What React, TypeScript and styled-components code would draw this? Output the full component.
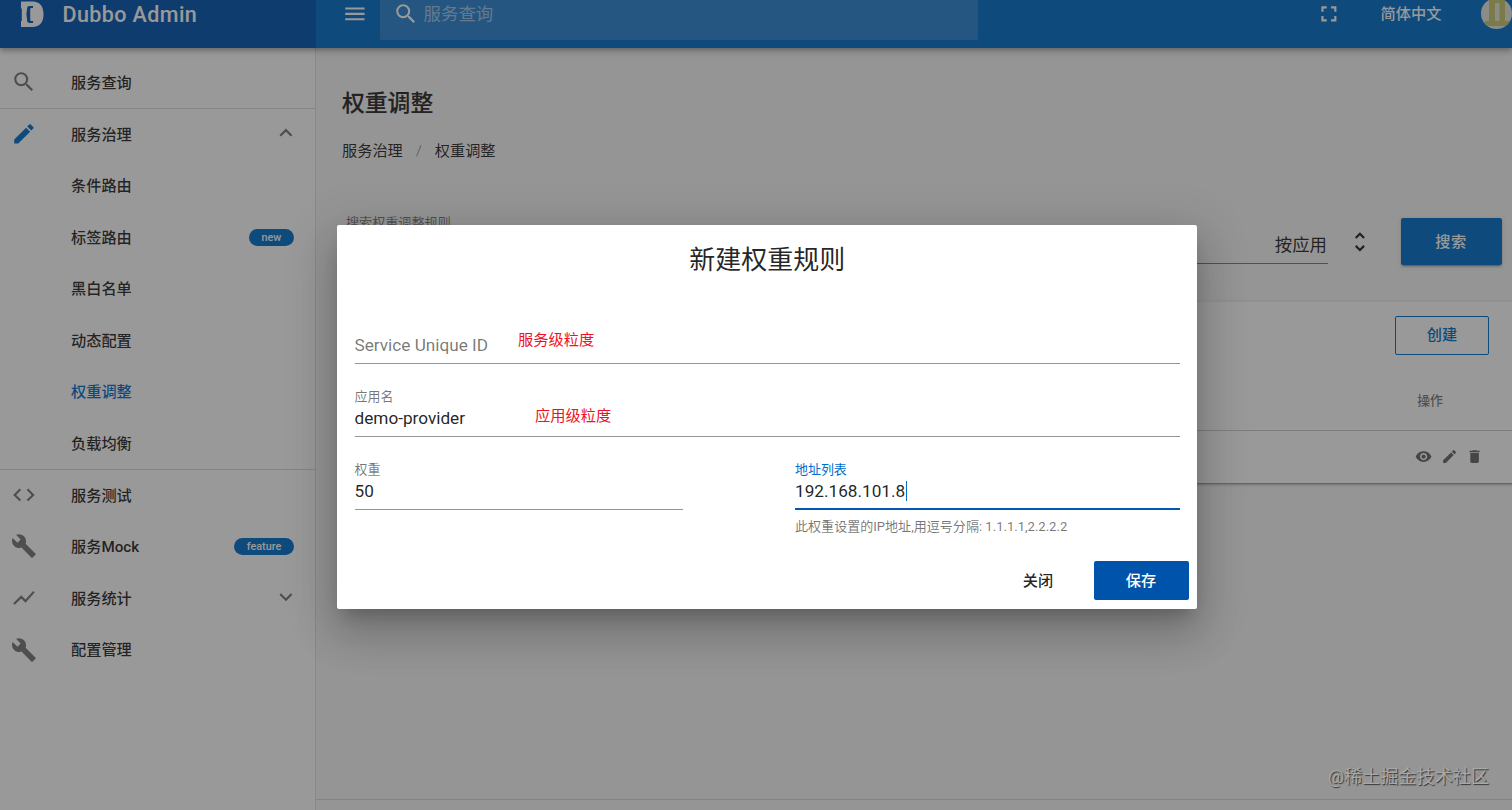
import React from "react";
import styled, { createGlobalStyle, css } from "styled-components";
import {
  MdBuild,
  MdCode,
  MdDelete,
  MdEdit,
  MdExpandLess,
  MdExpandMore,
  MdFullscreen,
  MdMenu,
  MdSearch,
  MdShowChart,
  MdUnfoldMore,
  MdVisibility,
} from "react-icons/md";

const primary = "#006dcb";
const textColor = "rgba(0,0,0,.87)";
const mutedText = "rgba(0,0,0,.54)";

const GlobalStyle = createGlobalStyle`
  * { box-sizing: border-box; }
  body {
    margin: 0;
    overflow: hidden;
    font-family: Roboto, "Noto Sans CJK SC", sans-serif;
    color: ${textColor};
  }
  svg { display: block; flex: none; }
`;

const Page = styled.div`
  position: relative;
  width: 1512px;
  height: 810px;
  overflow: hidden;
  display: flex;
  flex-direction: column;
  background: #f7f7f7;
`;

/* Header */
const Header = styled.header`
  position: relative;
  z-index: 1;
  flex: none;
  display: flex;
  height: 69px;
  margin-top: -21px;
  background: ${primary};
  color: #fff;
  box-shadow: 0 2px 4px -1px rgba(0, 0, 0, 0.2), 0 4px 5px rgba(0, 0, 0, 0.14),
    0 1px 10px rgba(0, 0, 0, 0.12);
`;

const Brand = styled.div`
  width: 316px;
  padding: 1px 0 0 20px;
  display: flex;
  align-items: center;
  gap: 18.5px;
  background: #0053b0;
  font-size: 21.5px;
  font-weight: 500;
  letter-spacing: 0.4px;
`;

const Toolbar = styled.div`
  flex: 1;
  min-width: 0;
  display: flex;
  align-items: center;
  padding-left: 25.5px;
  white-space: nowrap;
`;

const SearchBox = styled.div`
  flex: none;
  width: 598px;
  height: 52px;
  margin-left: 13px;
  padding-left: 13px;
  display: flex;
  align-items: center;
  gap: 4.5px;
  border-radius: 2px;
  background: rgba(255, 255, 255, 0.16);
  font-size: 17.4px;
`;

const SearchHint = styled.span`
  padding-bottom: 3px;
  color: rgba(255, 255, 255, 0.55);
`;

const Language = styled.span`
  margin-left: 38.5px;
  padding-bottom: 4px;
  font-size: 15.2px;
  font-weight: 500;
`;

const FullscreenSlot = styled.div`
  margin-left: 338px;
`;

const Avatar = styled.div`
  margin-left: 40px;
`;

/* Body */
const Body = styled.div`
  flex: 1;
  display: flex;
  min-height: 0;
`;

const Sidebar = styled.nav`
  flex: none;
  width: 316px;
  padding-top: 8.4px;
  background: #fff;
  border-right: 1px solid rgba(0, 0, 0, 0.12);
`;

const NavRow = styled.div<{ $divided?: boolean; $active?: boolean }>`
  height: 51.58px;
  padding: 0 16px 0 11px;
  display: flex;
  align-items: center;
  font-size: 15.2px;
  font-weight: 500;
  color: ${(p) => (p.$active ? primary : textColor)};
  ${(p) =>
    p.$divided &&
    css`
      box-shadow: inset 0 1px 0 rgba(0, 0, 0, 0.14);
    `}
`;

const NavIcon = styled.span<{ $active?: boolean }>`
  width: 60px;
  color: ${(p) => (p.$active ? primary : mutedText)};
`;

const NavLabel = styled.span`
  flex: 1;
  padding-bottom: 2.4px;
`;

const NavArrow = styled.span`
  margin-top: -2px;
  color: ${mutedText};
`;

const Chip = styled.span`
  height: 17px;
  margin: 1px 5px 0 0;
  padding: 0 12.8px;
  border-radius: 9px;
  background: ${primary};
  color: #fff;
  font-size: 10.8px;
  line-height: 18px;
`;

const Main = styled.main`
  flex: 1;
  min-width: 0;
  display: flex;
  flex-direction: column;
`;

const PageTitle = styled.h1`
  margin: 39px 0 0 26px;
  font-size: 22.8px;
  line-height: 34px;
  font-weight: 500;
  -webkit-text-stroke: 0.2px currentColor;
`;

const Breadcrumb = styled.div`
  margin: 19px 0 0 26px;
  display: flex;
  gap: 13px;
  font-size: 15.2px;
  line-height: 22px;
`;

const Slash = styled.span`
  width: 6px;
  text-align: center;
  color: rgba(0, 0, 0, 0.38);
`;

const SearchForm = styled.div`
  height: 140px;
  padding: 52px 10px 0 30px;
  display: flex;
  align-items: flex-start;
`;

const QueryField = styled.div`
  flex: none;
  width: 982px;
  height: 50px;
  padding-right: 1px;
  border-bottom: 1px solid rgba(0, 0, 0, 0.5);
  display: flex;
  justify-content: space-between;
`;

const QueryLabel = styled.span`
  font-size: 13.1px;
  line-height: 20px;
  color: ${mutedText};
`;

const QueryMode = styled.span`
  padding-top: 18px;
  font-size: 17.4px;
  line-height: 26px;
`;

const UnfoldSlot = styled.span`
  margin: 15px 28.7px 0 18.5px;
  color: ${textColor};
`;

const SearchButton = styled.button`
  flex: none;
  width: 101px;
  height: 47px;
  margin-top: 4px;
  padding: 0 1px 4px 0;
  border: 0;
  border-radius: 2px;
  background: ${primary};
  color: #fff;
  font: 500 15.2px Roboto, "Noto Sans CJK SC", sans-serif;
  letter-spacing: 0.5px;
  box-shadow: 0 3px 1px -2px rgba(0, 0, 0, 0.2), 0 2px 2px rgba(0, 0, 0, 0.14),
    0 1px 5px rgba(0, 0, 0, 0.12);
`;

const TableCard = styled.section`
  margin: 0 -28px 0 26px;
  height: 181.4px;
  background: #fff;
  box-shadow: 0 3px 1px -2px rgba(0, 0, 0, 0.2), 0 2px 2px rgba(0, 0, 0, 0.14),
    0 1px 5px rgba(0, 0, 0, 0.12);
  display: flex;
  flex-direction: column;
`;

const CardActions = styled.div`
  height: 67px;
  padding: 14px 51px 0 0;
  display: flex;
  justify-content: flex-end;
`;

const OutlineButton = styled.button`
  width: 94px;
  height: 38.5px;
  padding: 0 0 4px;
  border: 1px solid ${primary};
  border-radius: 2px;
  background: transparent;
  color: ${primary};
  font: 500 15.2px Roboto, "Noto Sans CJK SC", sans-serif;
`;

const TableHead = styled.div`
  height: 62px;
  padding: 0 97px 1px 0;
  display: flex;
  justify-content: flex-end;
  align-items: center;
  border-bottom: 1px solid rgba(0, 0, 0, 0.2);
  font-size: 12.9px;
  font-weight: 500;
  color: ${mutedText};
`;

const TableRow = styled.div`
  flex: 1;
  padding: 0 56.5px 1px 0;
  display: flex;
  justify-content: flex-end;
  align-items: center;
  gap: 8.5px;
  color: rgba(0, 0, 0, 0.6);
`;

const Footer = styled.footer`
  height: 11px;
  margin-top: auto;
  border-top: 1px solid rgba(0, 0, 0, 0.14);
`;

/* Dialog */
const Overlay = styled.div`
  position: absolute;
  inset: 0;
  z-index: 2;
  padding: 225px 0 0 337px;
  background: rgba(33, 33, 33, 0.46);
`;

const Dialog = styled.div`
  position: relative;
  width: 860px;
  height: 383.6px;
  border-radius: 2px;
  background: #fff;
  display: flex;
  flex-direction: column;
  padding: 0 17px 0 17.5px;
  box-shadow: 0 12px 16px -7px rgba(0, 0, 0, 0.2),
    0 26px 41px 3px rgba(0, 0, 0, 0.14), 0 10px 49px 9px rgba(0, 0, 0, 0.12);
`;

const DialogTitle = styled.h2`
  margin: 16px 0 36px;
  font-size: 26px;
  line-height: 38px;
  font-weight: 400;
  text-align: center;
`;

const Field = styled.div<{ $width?: number; $focused?: boolean }>`
  width: ${(p) => (p.$width ? `${p.$width}px` : "100%")};
  height: 73px;
  color: ${(p) => (p.$focused ? primary : mutedText)};
`;

const FieldLabel = styled.div`
  height: 20px;
  font-size: 12.95px;
  line-height: 18px;
`;

const FieldValue = styled.div<{ $focused?: boolean; $placeholder?: boolean }>`
  height: 29px;
  display: flex;
  align-items: flex-start;
  border-bottom: ${(p) => (p.$focused ? "2px solid #0058b0" : "1px solid rgba(0,0,0,.42)")};
  color: ${(p) => (p.$placeholder ? mutedText : textColor)};
  font-size: 17.2px;
  line-height: 20px;
`;

const Caret = styled.span`
  width: 1px;
  height: 20px;
  margin-left: 1px;
  background: ${primary};
`;

const FieldHint = styled.div`
  padding-top: 7px;
  font-size: 13.05px;
  line-height: 20px;
  color: ${mutedText};
  white-space: nowrap;
`;

const FieldRow = styled.div`
  display: flex;
  justify-content: space-between;
`;

const DialogActions = styled.div`
  margin: auto -8.5px 8.6px 0;
  display: flex;
  justify-content: flex-end;
  gap: 8px;
`;

const DialogButton = styled.button<{ $filled?: boolean }>`
  width: 95px;
  height: 39px;
  padding: 0 0 4px;
  border: 0;
  border-radius: 2px;
  background: ${(p) => (p.$filled ? "#0053ab" : "transparent")};
  color: ${(p) => (p.$filled ? "#fff" : textColor)};
  font: 500 15.2px Roboto, "Noto Sans CJK SC", sans-serif;
`;

const Note = styled.span<{ $left: number; $top: number }>`
  position: absolute;
  left: ${(p) => p.$left}px;
  top: ${(p) => p.$top}px;
  font-size: 15.25px;
  line-height: 22px;
  color: #ef1226;
`;

const Watermark = styled.span`
  position: absolute;
  z-index: 3;
  right: 23px;
  bottom: 20px;
  font-size: 17.9px;
  line-height: 26px;
  letter-spacing: 0.2px;
  color: #a8a8a8;
  text-shadow: 1px 1px 1px rgba(0, 0, 0, 0.65);
`;

const Logo = () => (
  <svg width="24" height="27" viewBox="0 0 24 27">
    <path
      fill="#fff"
      fillRule="evenodd"
      d="M1 .5h11.500c7.500 0 11 5 11 12.800S20 26 12.500 26H1v-6h.8V7.500H1zM13 5H9.500C7.600 5 7 6 7 8.500l-.6 4.700.6 4.500c0 3 .6 4.300 2.500 4.300H13v-2h-1.300c-1 0-1.500-.4-1.500-1.500V8.500c0-1.100.5-1.500 1.500-1.500H13z"
    />
  </svg>
);

const AvatarImage = () => (
  <svg width="31" height="31" viewBox="0 0 31 31">
    <clipPath id="avatar-circle">
      <circle cx="15.500" cy="15.500" r="15.500" />
    </clipPath>
    <g clipPath="url(#avatar-circle)">
      <path fill="#e6e6e0" d="M0 0h31v31H0z" />
      <path fill="#c6c766" d="M8 1.500h16v21.500h4v5H4v-5h4zM14 5v18h4.500V5z" fillRule="evenodd" />
    </g>
  </svg>
);

const ICON = 25.8;

type NavItem = {
  label: string;
  icon?: React.ReactNode;
  arrow?: React.ReactNode;
  chip?: string;
  divided?: boolean;
  active?: boolean;
  iconActive?: boolean;
};

const navItems: NavItem[] = [
  { label: "服务查询", icon: <MdSearch size={ICON} /> },
  {
    label: "服务治理",
    icon: <MdEdit size={ICON} />,
    arrow: <MdExpandLess size={ICON} />,
    divided: true,
    iconActive: true,
  },
  { label: "条件路由" },
  { label: "标签路由", chip: "new" },
  { label: "黑白名单" },
  { label: "动态配置" },
  { label: "权重调整", active: true },
  { label: "负载均衡" },
  { label: "服务测试", icon: <MdCode size={ICON} />, divided: true },
  { label: "服务Mock", icon: <MdBuild size={ICON} />, chip: "feature" },
  { label: "服务统计", icon: <MdShowChart size={ICON} />, arrow: <MdExpandMore size={ICON} /> },
  { label: "配置管理", icon: <MdBuild size={ICON} /> },
];

export default function App() {
  return (
    <Page>
      <GlobalStyle />
      <Header>
        <Brand>
          <Logo />
          Dubbo Admin
        </Brand>
        <Toolbar>
          <MdMenu size={ICON} />
          <SearchBox>
            <MdSearch size={ICON} />
            <SearchHint>服务查询</SearchHint>
          </SearchBox>
          <FullscreenSlot>
            <MdFullscreen size={ICON} />
          </FullscreenSlot>
          <Language>简体中文</Language>
          <Avatar>
            <AvatarImage />
          </Avatar>
        </Toolbar>
      </Header>

      <Body>
        <Sidebar>
          {navItems.map((item) => (
            <NavRow key={item.label} $divided={item.divided} $active={item.active}>
              <NavIcon $active={item.iconActive}>{item.icon}</NavIcon>
              <NavLabel>{item.label}</NavLabel>
              {item.chip && <Chip>{item.chip}</Chip>}
              {item.arrow && <NavArrow>{item.arrow}</NavArrow>}
            </NavRow>
          ))}
        </Sidebar>

        <Main>
          <PageTitle>权重调整</PageTitle>
          <Breadcrumb>
            <span>服务治理</span>
            <Slash>/</Slash>
            <span>权重调整</span>
          </Breadcrumb>
          <SearchForm>
            <QueryField>
              <QueryLabel>搜索权重调整规则</QueryLabel>
              <QueryMode>按应用</QueryMode>
            </QueryField>
            <UnfoldSlot>
              <MdUnfoldMore size={ICON} />
            </UnfoldSlot>
            <SearchButton>搜索</SearchButton>
          </SearchForm>
          <TableCard>
            <CardActions>
              <OutlineButton>创建</OutlineButton>
            </CardActions>
            <TableHead>操作</TableHead>
            <TableRow>
              <MdVisibility size={17.2} />
              <MdEdit size={17.2} />
              <MdDelete size={17.2} />
            </TableRow>
          </TableCard>
          <Footer />
        </Main>
      </Body>

      <Overlay>
        <Dialog>
          <DialogTitle>新建权重规则</DialogTitle>
          <Field>
            <FieldLabel />
            <FieldValue $placeholder>Service Unique ID</FieldValue>
          </Field>
          <Field>
            <FieldLabel>应用名</FieldLabel>
            <FieldValue>demo-provider</FieldValue>
          </Field>
          <FieldRow>
            <Field $width={328.5}>
              <FieldLabel>权重</FieldLabel>
              <FieldValue>50</FieldValue>
            </Field>
            <Field $width={385} $focused>
              <FieldLabel>地址列表</FieldLabel>
              <FieldValue $focused>
                192.168.101.8
                <Caret />
              </FieldValue>
              <FieldHint>此权重设置的IP地址,用逗号分隔: 1.1.1.1,2.2.2.2</FieldHint>
            </Field>
          </FieldRow>
          <DialogActions>
            <DialogButton>关闭</DialogButton>
            <DialogButton $filled>保存</DialogButton>
          </DialogActions>
          <Note $left={181} $top={104}>服务级粒度</Note>
          <Note $left={198} $top={180}>应用级粒度</Note>
        </Dialog>
      </Overlay>
      <Watermark>@稀土掘金技术社区</Watermark>
    </Page>
  );
}
